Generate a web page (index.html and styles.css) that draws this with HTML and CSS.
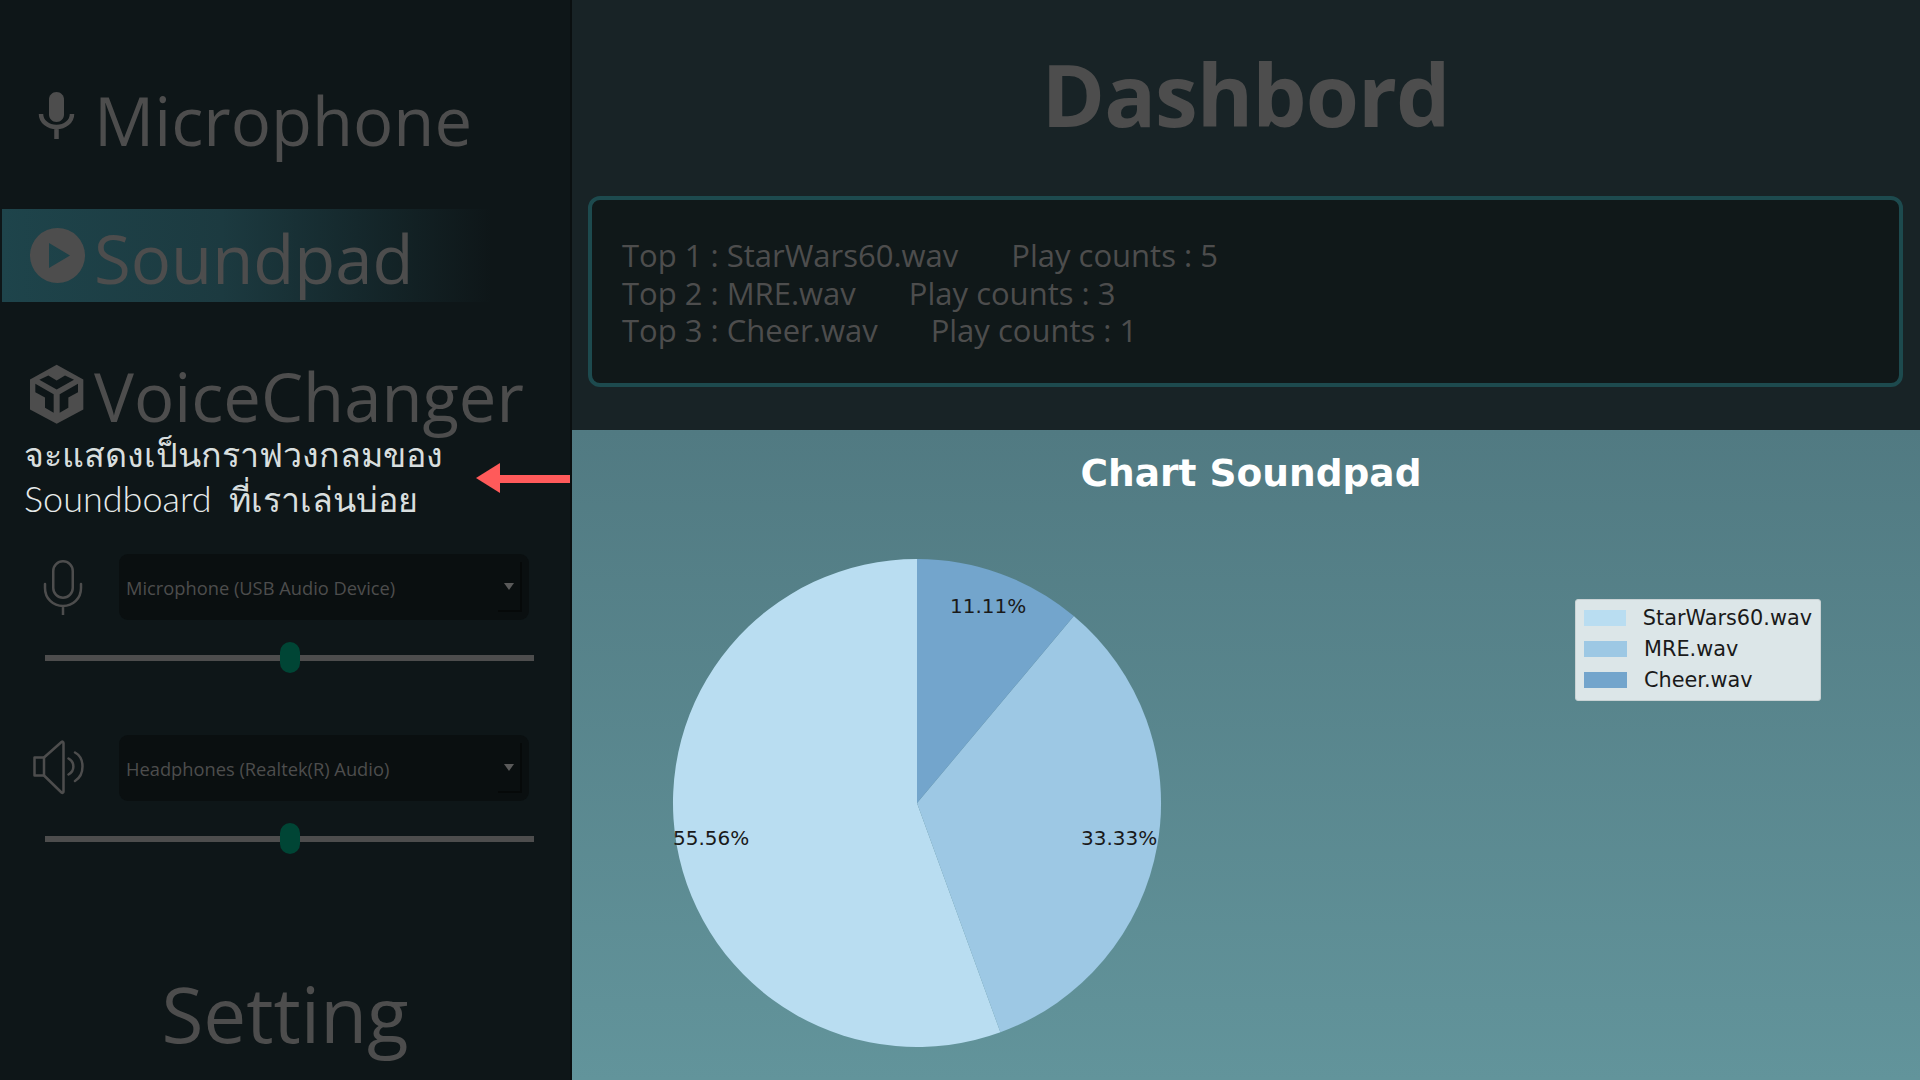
FILE: index.html
```html
<!DOCTYPE html>
<html lang="en">
<head>
    <meta charset="UTF-8">
    <meta name="viewport" content="width=device-width, initial-scale=1.0">
    <title>Dashbord</title>
    <link rel="stylesheet" href="styles.css">
</head>
<body>
    <aside class="sidebar">
        <nav class="side-nav">
            <a class="nav-item">
                <svg class="nav-icon" viewBox="0 0 55 55"><path fill="#4d4d4d" d="M26.500 2c-4.200 0-7.500 3.300-7.500 7.500v15c0 4.200 3.300 7.500 7.500 7.500s7.500-3.300 7.500-7.500v-15c0-4.200-3.300-7.500-7.500-7.500z"/><path fill="none" stroke="#4d4d4d" stroke-width="4.500" d="M11 24c0 7.500 7 13 15.500 13s15.500-5.500 15.500-13M26.500 37V49"/></svg>
                <span>Microphone</span>
            </a>
            <a class="nav-item active">
                <svg class="nav-icon" viewBox="0 0 55 55"><path fill="#4d4d4d" fill-rule="evenodd" d="M27.500 0a27.500 27.500 0 1 0 0 55a27.500 27.500 0 1 0 0-55zM19 15l21 12.500l-21 12.500z"/></svg>
                <span>Soundpad</span>
            </a>
            <a class="nav-item">
                <svg class="nav-icon cube" viewBox="30 25.500 165 180"><path fill="#4d4d4d" fill-rule="evenodd" d="M110 28L190 72V162L110 205L30 162V72zM58 73L85 60L110 75L135 60L162 73L110 102zM46 85L101 116V172L75 157V126L46 110zM174 85L119 116V172L145 157V126L174 110z"/></svg>
                <span>VoiceChanger</span>
            </a>
        </nav>
        <p class="note">จะแสดงเป็นกราฟวงกลมของ<br><span class="note-en">Soundboard</span> ที่เราเล่นบ่อย</p>

        <div class="device">
            <div class="device-row">
                <svg class="device-icon" viewBox="0 0 52 56"><g fill="none" stroke="#4d4d4d" stroke-width="2.500" stroke-linecap="round"><rect x="20.250" y="2.250" width="19.500" height="36.500" rx="9.750"/><path d="M12 25v4c0 10.500 8 18 18 18s18-7.500 18-18v-4M30 48v8"/></g></svg>
                <div class="select"><span>Microphone (USB Audio Device)</span><div class="select-btn"><i class="caret"></i></div></div>
            </div>
            <div class="slider"><div class="thumb"></div></div>
        </div>
        <div class="device speaker">
            <div class="device-row">
                <svg class="device-icon" viewBox="0 0 52 56"><g fill="none" stroke="#4d4d4d" stroke-width="2.500" stroke-linecap="round" stroke-linejoin="round"><path d="M11 17.500H1.500v18H11L28.500 52.500c1 .800 2 .200 2-1V3c0-1.200-1-1.800-2-1z"/><path d="M11 17.500v18M35.500 18.500C42 22 42 31 35.500 34.500M42 12.500C52 18 52 35 42 41"/></g></svg>
                <div class="select"><span>Headphones (Realtek(R) Audio)</span><div class="select-btn"><i class="caret"></i></div></div>
            </div>
            <div class="slider"><div class="thumb"></div></div>
        </div>

        <div class="setting">Setting</div>
    </aside>

    <main class="main">
        <header class="top">
            <h1>Dashbord</h1>
            <div class="top-list">
                <p>Top 1 : StarWars60.wav<span class="count">Play counts : 5</span></p>
                <p>Top 2 : MRE.wav<span class="count">Play counts : 3</span></p>
                <p>Top 3 : Cheer.wav<span class="count">Play counts : 1</span></p>
            </div>
        </header>
        <section class="chart">
            <h2>Chart Soundpad</h2>
            <div class="chart-body">
                <svg class="pie" viewBox="0 0 488 488">
                    <path fill="#b9ddf1" d="M244 244L327.400 473.300A244 244 0 1 1 244 0z"/>
                    <path fill="#9dc8e4" d="M244 244L400.800 57A244 244 0 0 1 327.400 473.300z"/>
                    <path fill="#73a5cc" d="M244 244V0A244 244 0 0 1 400.800 57z"/>
                    <text x="277" y="54">11.11%</text>
                    <text x="0" y="286">55.56%</text>
                    <text x="408" y="286">33.33%</text>
                </svg>
                <ul class="legend">
                    <li><i class="sw-1"></i>StarWars60.wav</li>
                    <li><i class="sw-2"></i>MRE.wav</li>
                    <li><i class="sw-3"></i>Cheer.wav</li>
                </ul>
            </div>
        </section>
    </main>

    <div class="arrow"></div>
</body>
</html>
```
FILE: styles.css
```css
* {
    margin: 0;
    padding: 0;
    box-sizing: border-box;
}
body {
    width: 1920px;
    height: 1080px;
    display: flex;
    overflow: hidden;
    position: relative;
    background: #0a0f10;
    font-family: "Open Sans", "Noto Sans", sans-serif;
    color: #4d4d4d;
}
.sidebar {
    width: 572px;
    height: 1080px;
    padding-left: 2px;
    border-right: 2px solid #0a0f10;
    background: #0e1618;
    display: flex;
    flex-direction: column;
}
.side-nav {
    padding-top: 71px;
    display: flex;
    flex-direction: column;
    gap: 45px;
}
.nav-item {
    height: 93px;
    padding-left: 28px;
    display: flex;
    align-items: center;
    gap: 9px;
    font-size: 67px;
}
.nav-item span {
    margin-top: 5px;
}
.nav-item.active {
    background: linear-gradient(90deg, #1e444b 0, #1c3a40 220px, #0e1618 490px);
}
.nav-icon {
    width: 55px;
    height: 55px;
}
.nav-icon.cube {
    height: 60px;
}
.note {
    margin-top: -9px;
    padding-left: 22px;
    font-family: "Lato", "Noto Sans", sans-serif;
    font-size: 34px;
    font-weight: 100;
    line-height: 45px;
    color: #d8dede;
}
.note-en {
    margin-right: 8px;
    font-size: 36px;
    font-weight: 300;
    color: #e6eaea;
}
.device {
    margin-top: 33px;
    padding: 0 36px 0 31px;
}
.device.speaker {
    margin-top: 74px;
}
.device-row {
    display: flex;
    align-items: center;
    gap: 34px;
    padding-right: 5px;
}
.device-icon {
    width: 52px;
    height: 56px;
}
.select {
    flex: 1;
    height: 66px;
    padding-left: 7px;
    border-radius: 9px;
    background: #0a0f10;
    display: flex;
    align-items: center;
    justify-content: space-between;
    font-size: 18.300px;
}
.select-btn {
    width: 24px;
    height: 50px;
    margin-right: 7px;
    border-right: 2px solid #060909;
    border-bottom: 2px solid #060909;
    display: flex;
    align-items: center;
    justify-content: center;
}
.caret {
    border-left: 5px solid transparent;
    border-right: 5px solid transparent;
    border-top: 7px solid #5a5a5a;
}
.slider {
    margin: 35px 0 0 12px;
    height: 6px;
    background: #4d4d4d;
    position: relative;
}
.thumb {
    position: absolute;
    left: 235px;
    top: -13px;
    width: 20px;
    height: 31px;
    border-radius: 10px;
    background: #004535;
}
.setting {
    margin-top: auto;
    padding-bottom: 15px;
    padding-right: 2px;
    text-align: center;
    font-size: 76.500px;
}
.main {
    flex: 1;
    display: flex;
    flex-direction: column;
}
.top {
    height: 430px;
    padding: 0 17px 0 16px;
    background: #182326;
}
h1 {
    height: 196px;
    padding-top: 34px;
    text-align: center;
    font-size: 86px;
    font-weight: 700;
    letter-spacing: -1px;
    line-height: 120px;
}
.top-list {
    height: 191px;
    padding: 4px 30px 0;
    border: 4px solid #1d4a4e;
    border-radius: 12px;
    background: #101819;
    display: flex;
    flex-direction: column;
    justify-content: center;
    font-size: 31px;
    line-height: 37.500px;
}
.count {
    margin-left: 53px;
}
.chart {
    flex: 1;
    background: linear-gradient(180deg, #517a82, #62949b);
}
h2 {
    padding: 22px 0 0 10px;
    text-align: center;
    font-family: "DejaVu Sans", sans-serif;
    font-size: 37.500px;
    font-weight: 700;
    line-height: 42px;
    color: #fff;
}
.chart-body {
    padding: 65px 0 0 101px;
    display: flex;
    align-items: flex-start;
}
.pie {
    width: 488px;
    height: 488px;
    overflow: visible;
}
.pie text {
    font-family: "DejaVu Sans", sans-serif;
    font-size: 20px;
    fill: #1a1a1a;
}
.legend {
    margin: 40px 0 0 414px;
    width: 246px;
    height: 102px;
    padding: 2px 8px;
    list-style: none;
    border: 1px solid #c8d2d4;
    border-radius: 3px;
    background: #dce6e8;
    font-family: "DejaVu Sans", sans-serif;
    font-size: 20.800px;
    color: #1a1a1a;
}
.legend li {
    height: 31.300px;
    display: flex;
    align-items: center;
    gap: 17px;
}
.legend i {
    width: 43px;
    height: 16px;
}
.sw-1 { background: #b9ddf1; }
.sw-2 { background: #9dc8e4; }
.sw-3 { background: #73a5cc; }
.arrow {
    position: absolute;
    left: 476px;
    top: 463px;
    width: 94px;
    height: 31px;
}
.arrow::before {
    content: "";
    position: absolute;
    left: 20px;
    right: 0;
    top: 12px;
    height: 8px;
    background: #ff5a5a;
}
.arrow::after {
    content: "";
    position: absolute;
    left: 0;
    top: 0;
    border-top: 15.500px solid transparent;
    border-bottom: 15.500px solid transparent;
    border-right: 24px solid #ff5a5a;
}
```
